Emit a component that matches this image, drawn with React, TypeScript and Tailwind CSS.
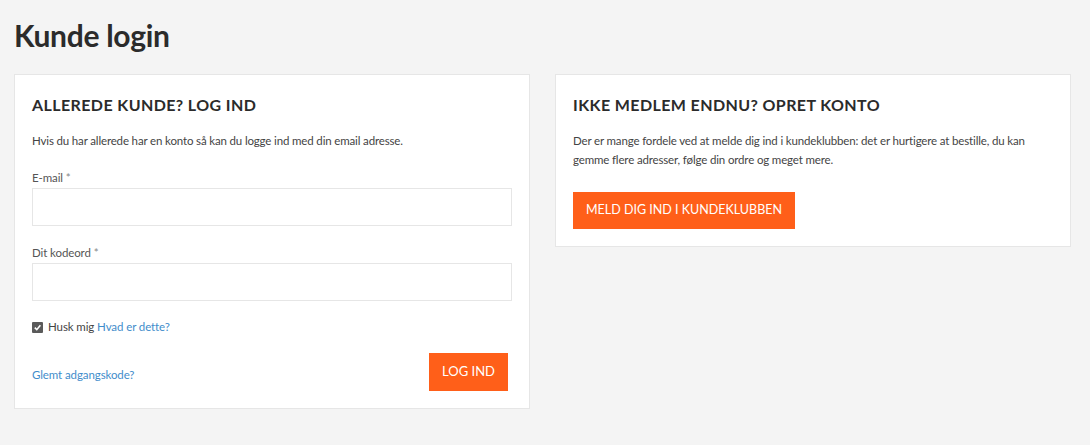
import React from 'react';

const font = { fontFamily: 'Lato, "Liberation Sans", sans-serif' };

function Field({ label }: { label: string }) {
  return (
    <div>
      <label className="block h-5 text-[11.5px] leading-5 tracking-[-0.1px] text-[#555]">
        {label} <span className="text-[#888]">*</span>
      </label>
      <input
        type="text"
        className="block h-[38px] w-full border border-[#e6e6e6] bg-white px-3 text-sm outline-none"
      />
    </div>
  );
}

export default function App() {
  return (
    <div style={font} className="min-h-[445px] bg-[#f4f4f4] pl-[14px] pr-[18px] pt-[15px] text-[#333]">
      <h1 className="h-[40px] text-[30px] font-bold leading-[40px] tracking-[-0.3px] text-[#2b2b2b]">Kunde login</h1>

      <div className="mt-[19px] grid grid-cols-[516px_516px] items-start gap-[25px]">
        {/* Login */}
        <div className="border border-[#e6e6e6] bg-white px-[17px] pb-[17px] pt-[19px]">
          <h2 className="text-[16px] font-bold uppercase leading-[22px] tracking-[0.4px] text-[#2b2b2b]">
            Allerede kunde? Log ind
          </h2>
          <p className="mt-[15px] text-[11.5px] leading-5 tracking-[-0.15px] text-[#444]">
            Hvis du har allerede har en konto så kan du logge ind med din email adresse.
          </p>
          <div className="mt-[17px]">
            <Field label="E-mail" />
          </div>
          <div className="mt-[17px]">
            <Field label="Dit kodeord" />
          </div>
          <div className="mt-[16px] flex h-5 items-center text-[11.5px] tracking-[-0.1px] text-[#444]">
            <span className="mr-[5px] flex h-[11px] w-[11px] items-center justify-center rounded-[1px] bg-[#5a5a5a]">
              <svg width="9" height="9" viewBox="0 0 10 10">
                <path d="M2 5.2 L4.2 7.4 L8.2 2.6" stroke="#fff" strokeWidth="1.8" fill="none" />
              </svg>
            </span>
            Husk mig&nbsp;<a className="text-[#3f8dcb]">Hvad er dette?</a>
          </div>
          <div className="mt-[16px] flex items-center justify-between">
            <a className="pt-[6px] text-[11.5px] tracking-[-0.1px] text-[#3f8dcb]">Glemt adgangskode?</a>
            <button className="mr-[4px] h-[38px] bg-[#ff5f19] px-[13px] text-[13px] uppercase text-white">Log ind</button>
          </div>
        </div>

        {/* Register */}
        <div className="border border-[#e6e6e6] bg-white px-[17px] pb-[17px] pt-[19px]">
          <h2 className="text-[16px] font-bold uppercase leading-[22px] tracking-[0.4px] text-[#2b2b2b]">
            Ikke medlem endnu? Opret konto
          </h2>
          <p className="mt-[15px] text-[11.5px] leading-[19px] tracking-[-0.15px] text-[#444]">
            Der er mange fordele ved at melde dig ind i kundeklubben: det er hurtigere at bestille, du kan gemme flere adresser, følge din ordre og meget mere.
          </p>
          <button className="mt-[23px] h-[37px] bg-[#ff5f19] px-[13px] text-[12.5px] uppercase text-white">
            Meld dig ind i kundeklubben
          </button>
        </div>
      </div>
    </div>
  );
}
